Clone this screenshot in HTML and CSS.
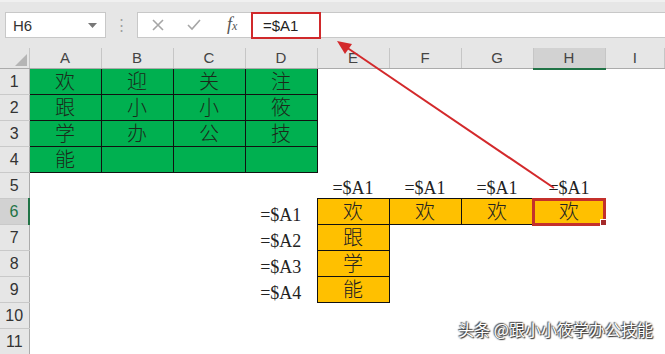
FILE: index.html
```html
<!DOCTYPE html>
<html lang="zh">
<head>
  <meta charset="UTF-8" />
  <title>Excel $A1</title>
  <link rel="stylesheet" href="styles.css">
</head>
<body>

<div class="ribbon">
  <div class="namebox">
    <span>H6</span>
    <svg class="drop" width="9" height="5" viewBox="0 0 9 5"><polygon points="0,0 9,0 4.5,5" fill="#777"/></svg>
  </div>
  <div class="dots">⋮</div>
  <div class="fbtns">
    <svg width="14" height="14" viewBox="0 0 14 14"><path d="M2 2 L12 12 M12 2 L2 12" stroke="#a6a6a6" stroke-width="1.6"/></svg>
    <svg width="16" height="14" viewBox="0 0 16 14"><path d="M2 7 L6 11 L14 2" stroke="#a6a6a6" stroke-width="1.6" fill="none"/></svg>
    <span class="fx">f<sub>x</sub></span>
  </div>
  <div class="finput">
    <span class="mark">=$A1</span>
  </div>
</div>

<table class="sheet">
  <colgroup>
    <col class="c-head">
    <col class="c"><col class="c"><col class="c"><col class="c">
    <col class="c"><col class="c"><col class="c"><col class="c">
    <col>
  </colgroup>
  <tr class="hdr">
    <th class="corner"><svg width="12" height="12" viewBox="0 0 12 12"><polygon points="12,0 12,12 0,12" fill="#b5b5b5"/></svg></th>
    <th>A</th><th>B</th><th>C</th><th>D</th><th>E</th><th>F</th><th>G</th><th class="sel">H</th><th>I</th>
  </tr>
  <tr>
    <th class="rh">1</th>
    <td class="g">欢</td><td class="g">迎</td><td class="g">关</td><td class="g">注</td>
    <td></td><td></td><td></td><td></td><td></td>
  </tr>
  <tr>
    <th class="rh">2</th>
    <td class="g">跟</td><td class="g">小</td><td class="g">小</td><td class="g">筱</td>
    <td></td><td></td><td></td><td></td><td></td>
  </tr>
  <tr>
    <th class="rh">3</th>
    <td class="g">学</td><td class="g">办</td><td class="g">公</td><td class="g">技</td>
    <td></td><td></td><td></td><td></td><td></td>
  </tr>
  <tr>
    <th class="rh">4</th>
    <td class="g">能</td><td class="g"></td><td class="g"></td><td class="g"></td>
    <td></td><td></td><td></td><td></td><td></td>
  </tr>
  <tr>
    <th class="rh">5</th>
    <td></td><td></td><td></td><td></td>
    <td class="f">=$A1</td><td class="f">=$A1</td><td class="f">=$A1</td><td class="f">=$A1</td><td></td>
  </tr>
  <tr>
    <th class="rh on">6</th>
    <td></td><td></td><td></td><td class="f">=$A1</td>
    <td class="o">欢</td><td class="o">欢</td><td class="o">欢</td><td class="o active">欢</td><td></td>
  </tr>
  <tr>
    <th class="rh">7</th>
    <td></td><td></td><td></td><td class="f">=$A2</td>
    <td class="o">跟</td><td></td><td></td><td></td><td></td>
  </tr>
  <tr>
    <th class="rh">8</th>
    <td></td><td></td><td></td><td class="f">=$A3</td>
    <td class="o">学</td><td></td><td></td><td></td><td></td>
  </tr>
  <tr>
    <th class="rh">9</th>
    <td></td><td></td><td></td><td class="f">=$A4</td>
    <td class="o">能</td><td></td><td></td><td></td><td></td>
  </tr>
  <tr>
    <th class="rh">10</th>
    <td></td><td></td><td></td><td></td><td></td><td></td><td></td><td></td><td></td>
  </tr>
  <tr>
    <th class="rh">11</th>
    <td></td><td></td><td></td><td></td><td></td><td></td><td></td><td></td><td></td>
  </tr>
</table>

<svg class="arrow" width="665" height="354" viewBox="0 0 665 354">
  <line x1="554" y1="188" x2="346" y2="47" stroke="#d3292b" stroke-width="2"/>
  <polygon points="337,41 345,54 352,44" fill="#d3292b"/>
</svg>

<div class="watermark">头条 @跟小小筱学办公技能</div>

</body>
</html>
```

FILE: styles.css
```css
body {
  margin: 0;
  width: 665px;
  height: 354px;
  overflow: hidden;
  position: relative;
  background: #fff;
  font-family: 'Liberation Sans', 'Noto Sans CJK SC', sans-serif;
  color: #222;
}
.ribbon {
  height: 48px;
  box-sizing: border-box;
  padding-top: 10px;
  background: #e6e6e6;
  border-top: 2px solid #f0f0f0;
  display: flex;
  align-items: flex-start;
}
.namebox {
  margin-left: 5px;
  width: 101px;
  height: 26px;
  box-sizing: border-box;
  background: #fff;
  border: 1px solid #c8c8c8;
  display: flex;
  align-items: center;
  justify-content: space-between;
  padding: 0 8px 0 7px;
  font-size: 15px;
  color: #333;
}
.dots {
  width: 31px;
  text-align: center;
  color: #a0a0a0;
  font-size: 15px;
  line-height: 26px;
}
.fbtns {
  width: 114px;
  height: 26px;
  box-sizing: border-box;
  background: #fff;
  border: 1px solid #c8c8c8;
  border-right: none;
  display: flex;
  align-items: center;
  gap: 21px;
  padding-left: 13px;
}
.fx {
  font-family: 'Liberation Serif', serif;
  font-style: italic;
  font-size: 18px;
  color: #555;
  margin-left: 4px;
  line-height: 20px;
}
.fx sub {
  font-size: 12px;
  vertical-align: 0;
}
.finput {
  flex: 1;
  height: 26px;
  box-sizing: border-box;
  background: #fff;
  border-top: 1px solid #c8c8c8;
  border-bottom: 1px solid #c8c8c8;
}
.mark {
  display: block;
  width: 70px;
  height: 27px;
  box-sizing: border-box;
  border: 2px solid #d0292b;
  padding-left: 10px;
  margin-top: -1px;
  font-size: 15px;
  line-height: 23px;
  color: #222;
}

.sheet {
  border-collapse: collapse;
  table-layout: fixed;
  width: 665px;
}
.c-head { width: 29px; }
.c { width: 72px; }
.sheet tr { height: 26px; }
.sheet tr.hdr { height: 19px; }
.sheet th,
.sheet td {
  height: 25px;
  line-height: 22px;
  padding: 0;
  overflow: hidden;
}
.hdr th {
  height: 18px;
  background: #e6e6e6;
  font-weight: normal;
  font-size: 15px;
  color: #444;
  border-right: 1px solid #c6c6c6;
  border-bottom: 1px solid #ababab;
  line-height: 18px;
}
.hdr th.sel {
  background: #d2d2d2;
  border-bottom: 2px solid #217346;
}
.hdr th.corner {
  text-align: right;
  vertical-align: bottom;
  line-height: 0;
  padding: 0 2px 2px 0;
}
th.rh {
  background: #e6e6e6;
  font-weight: normal;
  font-size: 16px;
  color: #333;
  border-right: 1px solid #ababab;
  border-bottom: 1px solid #c9c9c9;
}
th.rh.on {
  background: #d2d2d2;
  color: #217346;
  border-right: 2px solid #217346;
}
.sheet td {
  text-align: center;
  font-family: 'Liberation Serif', 'Noto Sans CJK SC', serif;
  font-size: 20px;
  font-weight: 300;
  white-space: nowrap;
}
td.g {
  background: #00b050;
  border: 1px solid #111;
  color: #1b2a1b;
}
td.o {
  background: #ffc000;
  border: 1px solid #111;
  color: #222;
}
td.f {
  font-size: 18px;
  font-weight: normal;
  color: #222;
  vertical-align: bottom;
  line-height: 20px;
  overflow: visible;
}
td.active {
  position: relative;
  overflow: visible;
  outline: 3px solid #c4302b;
  outline-offset: -2px;
}
td.active::after {
  content: '';
  position: absolute;
  right: -2px;
  bottom: -2px;
  width: 5px;
  height: 5px;
  background: #a52a2a;
  border: 1px solid #fff;
}
.arrow {
  position: absolute;
  left: 0;
  top: 0;
  pointer-events: none;
}
.watermark {
  position: absolute;
  right: 12px;
  bottom: 13px;
  font-family: 'Noto Sans CJK SC', sans-serif;
  font-size: 16px;
  color: #fff;
  text-shadow: 0 0 2px #333, 1px 1px 1px #333, -1px -1px 1px #555;
}
```
